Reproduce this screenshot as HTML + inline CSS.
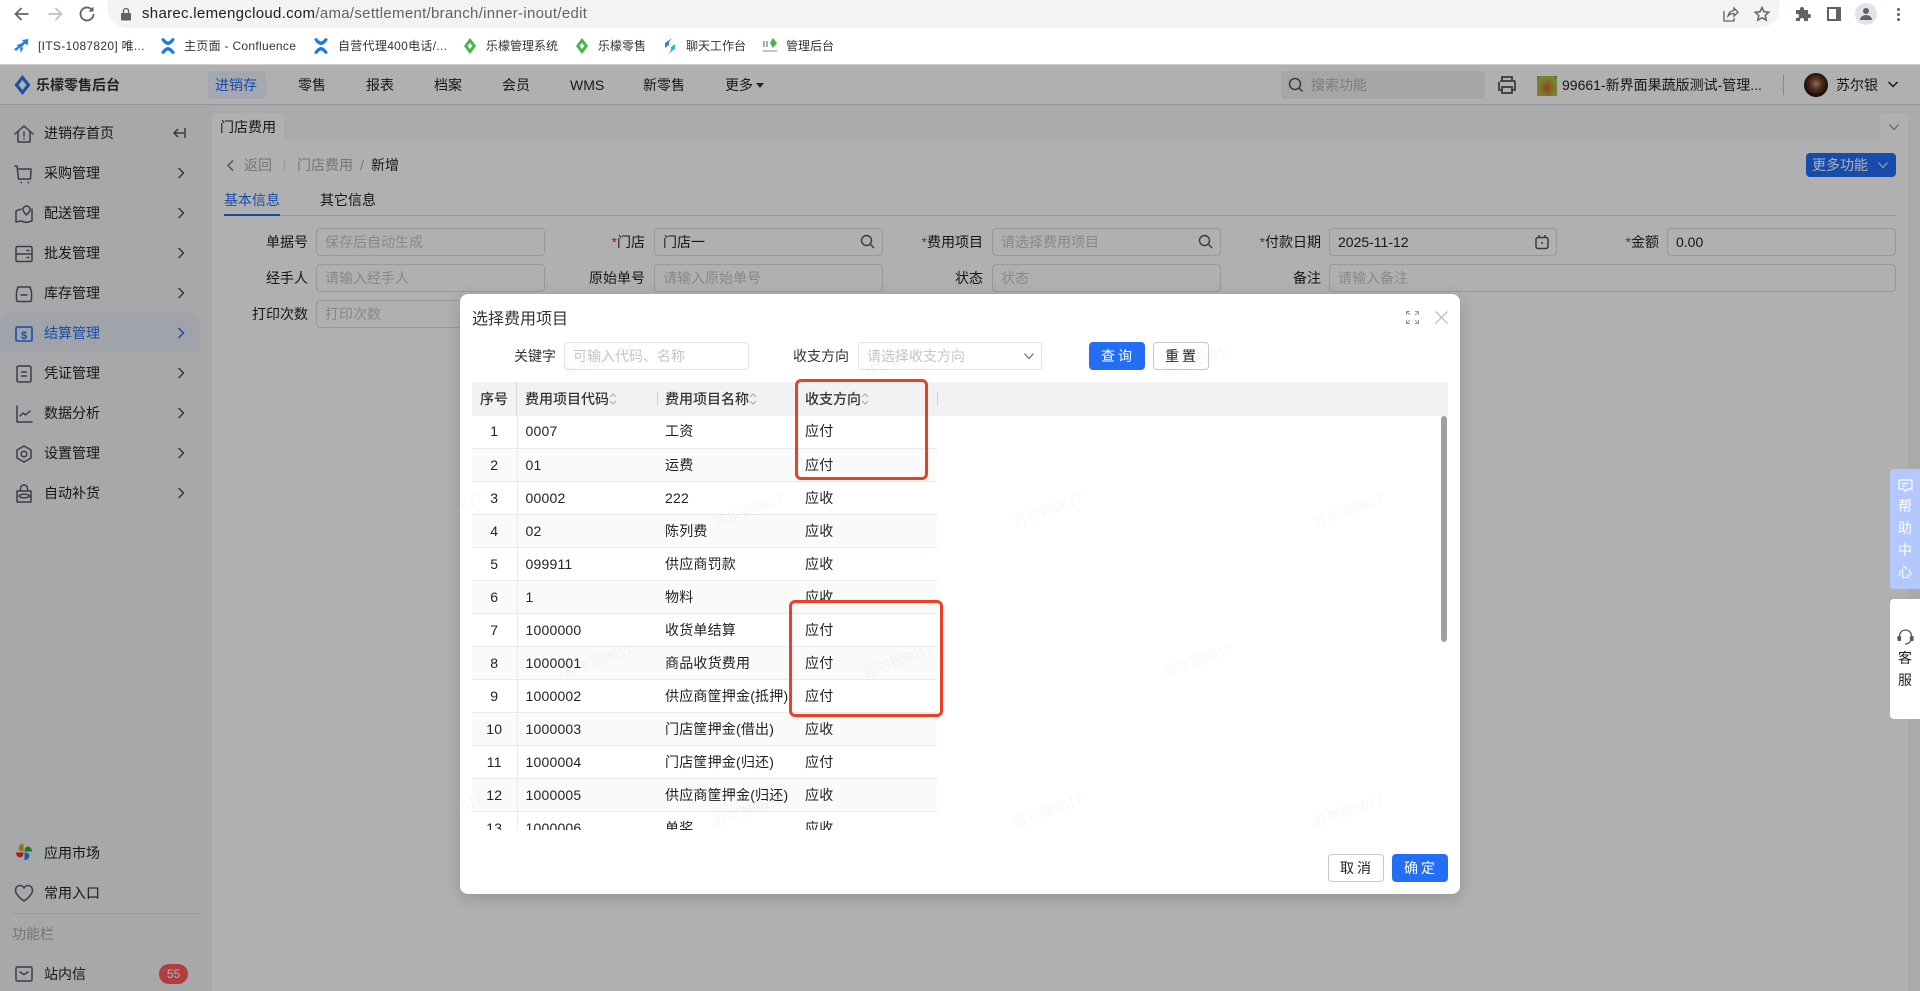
<!DOCTYPE html>
<html lang="zh-CN">
<head>
<meta charset="utf-8">
<title>选择费用项目</title>
<style>
html,body{margin:0;padding:0;width:1920px;height:991px;overflow:hidden;background:#fff;font-family:"Liberation Sans","Noto Sans CJK SC",sans-serif;font-size:14px;color:#222}
*{box-sizing:border-box}
.t{position:absolute;white-space:nowrap;line-height:20px;height:20px}
.a{position:absolute}
svg{position:absolute;overflow:visible}
.bm{font-size:12px;color:#333}
.ls{letter-spacing:.3px}
.si{stroke:#555a68;stroke-width:1.5;fill:none;stroke-linecap:round;stroke-linejoin:round}
.inp{position:absolute;height:28px;border:1px solid #dcdee2;border-radius:4px;background:#fff;padding:0 8px;line-height:26px;font-size:14px;color:#c6c6c6;white-space:nowrap;overflow:hidden}
.val{color:#222}
.lb{position:absolute;line-height:28px;height:28px;text-align:right;white-space:nowrap;color:#222}
.lb i{font-style:normal;color:#e03030}
table{border-collapse:collapse;table-layout:fixed;position:absolute;left:0;top:33px;width:465px}
td{height:33px;padding:0 0 0 8px;border-bottom:1px solid #e8eaec;line-height:32px;white-space:nowrap;color:#222;overflow:hidden;font-size:14px;letter-spacing:.2px}
td:first-child{text-align:center;padding:0;border-right:1px solid #e8eaec}
tr:nth-child(even) td{background:#f9fafa}
.th{position:absolute;top:0;height:34px;line-height:34px;font-weight:500;color:#333;white-space:nowrap}
.hs{position:absolute;top:10px;height:14px;width:1px;background:#cfd2d6}
.btn{position:absolute;height:28px;border-radius:4px;text-align:center;line-height:26px;font-size:14px;border:1px solid #c9c9c9;background:#fff;color:#222;letter-spacing:3px;padding-left:2px}
.pri{background:#246ef6;border-color:#246ef6;color:#fff}
.red{position:absolute;border:3px solid #ee3f24;border-radius:6px}
</style>
</head>
<body>
<!-- browser chrome -->
<div class="a" style="left:0;top:0;width:1920px;height:65px;background:#fff;border-bottom:1px solid #d0d0d0"></div>
<div class="a" style="left:107px;top:-14px;width:1673px;height:42px;background:#f1f3f4;border-radius:21px"></div>
<svg style="left:13px;top:5px" width="18" height="18" viewBox="0 0 18 18" fill="none" stroke="#5f6368" stroke-width="1.800"><path d="M15.500 9H2.500M8.500 3L2.500 9l6 6"/></svg>
<svg style="left:46px;top:5px" width="18" height="18" viewBox="0 0 18 18" fill="none" stroke="#bcc0c4" stroke-width="1.800"><path d="M2.500 9h13M9.500 3l6 6-6 6"/></svg>
<svg style="left:78px;top:5px" width="18" height="18" viewBox="0 0 18 18" fill="none" stroke="#5f6368" stroke-width="1.800"><path d="M14.500 5.500A6.500 6.500 0 1 0 15.500 9"/><path d="M15.500 1.500v5h-5z" fill="#5f6368" stroke="none"/></svg>
<svg style="left:121px;top:7px" width="10" height="14" viewBox="0 0 10 14"><path d="M1 6h8a1 1 0 0 1 1 1v5.500a1 1 0 0 1-1 1H1a1 1 0 0 1-1-1V7a1 1 0 0 1 1-1z" fill="#5f6368"/><path d="M2.500 6V4a2.500 2.500 0 0 1 5 0v2" fill="none" stroke="#5f6368" stroke-width="1.300"/></svg>
<div class="t" style="left:142px;top:4px;font-size:15px;color:#5f6368;letter-spacing:.3px"><span style="color:#202124">sharec.lemengcloud.com</span>/ama/settlement/branch/inner-inout/edit</div>
<svg style="left:1723px;top:6px" width="16" height="16" viewBox="0 0 16 16" fill="none" stroke="#5f6368" stroke-width="1.300"><path d="M1 5v10h10v-3M5 10c1-4 4-5.500 6-5.500V2l4 4.200-4 4V7.500c-2 0-4 .5-6 2.500z"/></svg>
<svg style="left:1754px;top:6px" width="16" height="16" viewBox="0 0 16 16" fill="none" stroke="#5f6368" stroke-width="1.500"><path d="M8 1.500l2 4.300 4.700.5-3.500 3.200 1 4.600L8 11.700l-4.200 2.400 1-4.600L1.300 6.300 6 5.800z"/></svg>
<svg style="left:1795px;top:6px" width="16" height="16" viewBox="0 0 16 16"><path d="M1 4h4V3a2 2 0 0 1 4 0v1h4v4h1a2 2 0 0 1 0 4h-1v3H9v-1a2 2 0 0 0-4 0v1H1v-3h1a2 2 0 0 0 0-4H1z" fill="#5f6368"/></svg>
<div class="a" style="left:1827px;top:7px;width:14px;height:14px;border:2px solid #5f6368;border-right-width:5px;background:#fff"></div>
<div class="a" style="left:1855px;top:3px;width:22px;height:22px;border-radius:50%;background:#e1e4ea"></div>
<svg style="left:1859px;top:7px" width="14" height="14" viewBox="0 0 14 14"><circle cx="7" cy="4" r="3" fill="#5f6368"/><path d="M1 13c0-3 3-5 6-5s6 2 6 5z" fill="#5f6368"/></svg>
<div class="a" style="left:1897px;top:8px;width:3px;height:3px;border-radius:50%;background:#5f6368;box-shadow:0 5px 0 #5f6368,0 10px 0 #5f6368"></div>

<!-- bookmarks -->
<svg style="left:14px;top:39px" width="15" height="14" viewBox="0 0 15 14"><path d="M14.500 0L8 1l1.500 1.800L5 6l2.500 2.500L11 4.500l2.500 2z" fill="#1d7fe8"/><path d="M8 4.500L2.500 6l1.500 1.500L0 10l2 2 4-3.500 1 1.500z" fill="#1d7fe8"/><path d="M6 9.500L7 14l2.500-6z" fill="#1d7fe8"/></svg>
<div class="t bm ls" style="left:38px;top:36px;">[ITS-1087820] 唯...</div>
<svg style="left:160px;top:38px" width="16" height="16" viewBox="0 0 16 16"><path d="M1 1c2 4 5 6 7 6s5-2 7-6l-3-1c-1 2-3 3.500-4 3.500S5 2 4 0zM1 15c2-4 5-6 7-6s5 2 7 6l-3 1c-1-2-3-3.500-4-3.500S5 14 4 16z" fill="#1c78e8"/></svg>
<div class="t bm ls" style="left:184px;top:36px;">主页面 - Confluence</div>
<svg style="left:313px;top:38px" width="16" height="16" viewBox="0 0 16 16"><path d="M1 1c2 4 5 6 7 6s5-2 7-6l-3-1c-1 2-3 3.500-4 3.500S5 2 4 0zM1 15c2-4 5-6 7-6s5 2 7 6l-3 1c-1-2-3-3.500-4-3.500S5 14 4 16z" fill="#1c78e8"/></svg>
<div class="t bm ls" style="left:338px;top:36px;">自营代理400电话/...</div>
<svg style="left:464px;top:38px" width="12" height="16" viewBox="0 0 12 16"><path d="M6 0l6 8-6 8-6-8z" fill="#44b549"/><path d="M6 5l2.500 3L6 11 3.500 8z" fill="#fff"/></svg>
<div class="t bm" style="left:486px;top:36px;">乐檬管理系统</div>
<svg style="left:576px;top:38px" width="12" height="16" viewBox="0 0 12 16"><path d="M6 0l6 8-6 8-6-8z" fill="#44b549"/><path d="M6 5l2.500 3L6 11 3.500 8z" fill="#fff"/></svg>
<div class="t bm" style="left:598px;top:36px;">乐檬零售</div>
<svg style="left:663px;top:38px" width="14" height="16" viewBox="0 0 14 16"><path d="M9 0L2 5v5l4-3V4z" fill="#2a86e8"/><path d="M5 16l7-5V6L8 9v3z" fill="#35b6d8"/></svg>
<div class="t bm" style="left:686px;top:36px;">聊天工作台</div>
<svg style="left:763px;top:38px" width="14" height="16" viewBox="0 0 14 16"><rect x="0" y="3" width="2" height="6" fill="#aaa"/><rect x="3" y="3" width="2" height="6" fill="#aaa"/><path d="M10 0l4 5-4 5-3-5z" fill="#44b549"/><rect x="0" y="12" width="14" height="2" fill="#c5c5c5"/></svg>
<div class="t bm" style="left:786px;top:36px;">管理后台</div>

<!-- app -->
<div class="a" style="left:0;top:65px;width:1920px;height:926px;background:#fff;overflow:hidden"></div>
<div class="a" style="left:0;top:104px;width:1920px;height:1px;background:#d8d8d8"></div>
<svg style="left:14px;top:75px" width="17" height="20" viewBox="0 0 17 20"><path d="M8.500 0l8 10-8 10-8-10z" fill="#2e74e6"/><path d="M8.500 5l4 5-4 5-4-5z" fill="#fff"/></svg>
<div class="t" style="left:36px;top:75px;font-weight:700;color:#333">乐檬零售后台</div>
<div class="a" style="left:208px;top:71px;width:58px;height:28px;background:#f0f3ff;border-radius:4px"></div>
<div class="t" style="left:215px;top:75px;color:#246ef6">进销存</div>
<div class="t" style="left:298px;top:75px">零售</div>
<div class="t" style="left:366px;top:75px">报表</div>
<div class="t" style="left:434px;top:75px">档案</div>
<div class="t" style="left:502px;top:75px">会员</div>
<div class="t" style="left:570px;top:75px">WMS</div>
<div class="t" style="left:643px;top:75px">新零售</div>
<div class="t" style="left:725px;top:75px">更多</div>
<svg style="left:756px;top:83px" width="8" height="5" viewBox="0 0 8 5"><path d="M0 0h8L4 5z" fill="#333"/></svg>

<div class="a" style="left:1281px;top:71px;width:204px;height:28px;background:#f0f1f4;border-radius:4px"></div>
<svg style="left:1288px;top:77px" width="16" height="16" viewBox="0 0 16 16" fill="none" stroke="#555" stroke-width="1.500"><circle cx="7" cy="7" r="5.500"/><path d="M11 11l3.500 3.500"/></svg>
<div class="t" style="left:1311px;top:75px;color:#b5b5b5">搜索功能</div>
<svg style="left:1497px;top:75px" width="20" height="20" viewBox="0 0 20 20" fill="none" stroke="#555" stroke-width="1.800"><path d="M5 6V2h10v4M3 6h14a1 1 0 0 1 1 1v8h-3M5 15H2V7"/><rect x="5" y="12" width="10" height="6"/></svg>
<div class="a" style="left:1537px;top:76px;width:20px;height:20px;background:radial-gradient(ellipse at 50% 60%,#d0602a 0,#c49a3a 35%,#9ccb55 75%,#6d9a38 100%)"></div>
<div class="t" style="left:1562px;top:75px;">99661-新界面果蔬版测试-管理...</div>
<div class="a" style="left:1783px;top:75px;width:1px;height:20px;background:#c8c8c8"></div>
<div class="a" style="left:1804px;top:73px;width:24px;height:24px;border-radius:50%;background:radial-gradient(circle at 50% 45%,#c89a80 0,#7a4a30 30%,#2a1208 65%,#120806)"></div>
<div class="t" style="left:1836px;top:75px;">苏尔银</div>
<svg style="left:1888px;top:81px" width="10" height="7" viewBox="0 0 10 7" fill="none" stroke="#222" stroke-width="1.500"><path d="M.5 1l4.500 4.500L9.500 1"/></svg>

<!-- sidebar -->
<div class="a" style="left:0;top:105px;width:212px;height:886px;background:#f1f3f6"></div>
<div class="a" style="left:0;top:313px;width:200px;height:40px;background:#e9ecf8;border-radius:8px"></div>
<svg style="left:14px;top:124px" width="20" height="20" viewBox="0 0 20 20" class="si"><path d="M1 10L10 2l9 8M4 8v10h12V8M10 8v4M10 14.500v.5"/></svg>
<svg style="left:14px;top:164px" width="20" height="20" viewBox="0 0 20 20" class="si"><path d="M1 2h2l1.500 13h12L17 5H4"/><path d="M7 18.500h.5M14 18.500h.5"/></svg>
<svg style="left:14px;top:204px" width="20" height="20" viewBox="0 0 20 20" class="si"><path d="M7 5L2 7v11l5-1 5 1.500 6-1.500V5"/><path d="M12.500 2a3.500 3.500 0 0 1 3.500 3.500c0 2-3.500 5.500-3.500 5.500S9 7.500 9 5.500A3.500 3.500 0 0 1 12.500 2z"/></svg>
<svg style="left:14px;top:244px" width="20" height="20" viewBox="0 0 20 20" class="si"><rect x="2" y="2.500" width="16" height="15" rx="1.500"/><path d="M2 10h16M13 6.500h2M13 13.500h2"/></svg>
<svg style="left:14px;top:284px" width="20" height="20" viewBox="0 0 20 20" class="si"><path d="M2.500 8L4 3h12l1.500 5v8a1.500 1.500 0 0 1-1.500 1.500H4A1.500 1.500 0 0 1 2.500 16zM7 11h6"/></svg>
<svg style="left:14px;top:324px" width="20" height="20" viewBox="0 0 20 20" fill="none" stroke="#246ef6" stroke-width="1.600"><rect x="2" y="3" width="16" height="14" rx="1.500"/><text x="10" y="15" text-anchor="middle" font-size="11" font-weight="700" fill="#246ef6" stroke="none" font-family="Liberation Sans">$</text></svg>
<svg style="left:14px;top:364px" width="20" height="20" viewBox="0 0 20 20" class="si"><rect x="3" y="2" width="14" height="16" rx="1.500"/><path d="M7.500 8h5M7.500 12h5"/></svg>
<svg style="left:14px;top:404px" width="20" height="20" viewBox="0 0 20 20" class="si"><path d="M3 2v16h15M6 12l3-3 2.500 2L16 7"/></svg>
<svg style="left:14px;top:444px" width="20" height="20" viewBox="0 0 20 20" class="si"><path d="M10 2l7 4v8l-7 4-7-4V6z"/><circle cx="10" cy="10" r="2.800"/></svg>
<svg style="left:14px;top:484px" width="20" height="20" viewBox="0 0 20 20" class="si"><path d="M3 7h14v11H3zM6.500 7V4.500a3.500 3.500 0 0 1 7 0V7M5 12c2-2.500 8-2.500 11 0-3 2.500-9 2.500-11 0z"/></svg>
<svg style="left:15px;top:843px" width="18" height="18" viewBox="0 0 18 18"><path d="M8.500 8.500V1C5 1 3.500 3.500 3.500 6c1 2 3 2.500 5 2.500z" fill="#e3a006"/><path d="M9.500 8.500H17c0-3.500-2.500-5-5-5-2 1-2.500 3-2.500 5z" fill="#2bb03f"/><path d="M8.500 9.500H1c0 3.500 2.500 5 5 5 2-1 2.500-3 2.500-5z" fill="#e83030"/><path d="M9.500 9.500V17c3.500 0 5-2.500 5-5-1-2-3-2.500-5-2.500z" fill="#2a84e8"/></svg>
<svg style="left:14px;top:883px" width="20" height="20" viewBox="0 0 20 20" class="si"><path d="M10 18C3 13 1.500 9.500 1.500 7A4.500 4.500 0 0 1 10 5a4.500 4.500 0 0 1 8.500 2c0 2.500-1.500 6-8.500 11z"/></svg>
<svg style="left:14px;top:964px" width="20" height="20" viewBox="0 0 20 20" class="si"><rect x="2" y="3" width="16" height="14" rx="1.500"/><path d="M6 8l4 2.500L14 8"/></svg>

<div class="t" style="left:44px;top:123px">进销存首页</div>
<div class="t" style="left:44px;top:163px">采购管理</div>
<div class="t" style="left:44px;top:203px">配送管理</div>
<div class="t" style="left:44px;top:243px">批发管理</div>
<div class="t" style="left:44px;top:283px">库存管理</div>
<div class="t" style="left:44px;top:323px;color:#246ef6">结算管理</div>
<div class="t" style="left:44px;top:363px">凭证管理</div>
<div class="t" style="left:44px;top:403px">数据分析</div>
<div class="t" style="left:44px;top:443px">设置管理</div>
<div class="t" style="left:44px;top:483px">自动补货</div>
<div class="t" style="left:44px;top:843px">应用市场</div>
<div class="t" style="left:44px;top:883px">常用入口</div>
<div class="t" style="left:12px;top:924px;color:#aaa">功能栏</div>
<div class="t" style="left:44px;top:964px">站内信</div>
<div class="a" style="left:12px;top:913px;width:188px;height:1px;background:#dfe1e6"></div>
<div class="a" style="left:159px;top:964px;width:29px;height:20px;border-radius:10px;background:#ff5a5f;color:#fff;font-size:12px;line-height:20px;text-align:center">55</div>
<svg style="left:173px;top:128px" width="13" height="10" viewBox="0 0 13 10" fill="none" stroke="#555" stroke-width="1.500"><path d="M12 0v10M11 5H1M5 1L1 5l4 4"/></svg>
<svg style="left:178px;top:168px" width="6" height="330" viewBox="0 0 6 330" fill="none" stroke="#555" stroke-width="1.500"><path d="M.5 0l5 5-5 5M.5 40l5 5-5 5M.5 80l5 5-5 5M.5 120l5 5-5 5M.5 200l5 5-5 5M.5 240l5 5-5 5M.5 280l5 5-5 5M.5 320l5 5-5 5"/><path d="M.5 160l5 5-5 5" stroke="#246ef6"/></svg>

<!-- tabs strip -->
<div class="a" style="left:212px;top:105px;width:1708px;height:36px;background:#f5f6f8"></div>
<div class="a" style="left:212px;top:113px;width:72px;height:28px;background:#fff;border-radius:4px 4px 0 0"></div>
<div class="t" style="left:220px;top:117px;">门店费用</div>
<div class="a" style="left:1880px;top:113px;width:28px;height:28px;background:#fff;border-radius:4px 4px 0 0"></div>
<svg style="left:1889px;top:124px" width="10" height="6" viewBox="0 0 10 6" fill="none" stroke="#999" stroke-width="1.300"><path d="M.5.5L5 5.500 9.500.5"/></svg>
<div class="a" style="left:1908px;top:141px;width:12px;height:850px;background:#f5f6f8"></div>

<!-- breadcrumb -->
<svg style="left:227px;top:160px" width="7" height="11" viewBox="0 0 7 11" fill="none" stroke="#777" stroke-width="1.500"><path d="M6 .5l-5 5 5 5"/></svg>
<div class="t" style="left:244px;top:155px;color:#aaa">返回</div>
<div class="a" style="left:284px;top:159px;width:1px;height:12px;background:#ddd"></div>
<div class="t" style="left:297px;top:155px;color:#aaa">门店费用</div>
<div class="t" style="left:360px;top:155px;color:#aaa">/</div>
<div class="t" style="left:371px;top:155px;color:#222">新增</div>
<div class="a" style="left:1806px;top:153px;width:90px;height:24px;background:#246ef6;border-radius:4px"></div>
<div class="t" style="left:1812px;top:155px;color:#fff">更多功能</div>
<svg style="left:1878px;top:162px" width="10" height="6" viewBox="0 0 10 6" fill="none" stroke="#cfe0ff" stroke-width="1.300"><path d="M.5.5L5 5.500 9.500.5"/></svg>
<div class="t" style="left:224px;top:190px;color:#246ef6">基本信息</div>
<div class="t" style="left:320px;top:190px">其它信息</div>
<div class="a" style="left:224px;top:215px;width:1672px;height:1px;background:#dcdee2"></div>
<div class="a" style="left:224px;top:214px;width:56px;height:2px;background:#246ef6"></div>

<!-- form -->
<div class="lb" style="right:1612px;top:228px">单据号</div>
<div class="inp" style="left:316px;top:228px;width:229px">保存后自动生成</div>
<div class="lb" style="right:1612px;top:264px">经手人</div>
<div class="inp" style="left:316px;top:264px;width:229px">请输入经手人</div>
<div class="lb" style="right:1612px;top:300px">打印次数</div>
<div class="inp" style="left:316px;top:300px;width:229px">打印次数</div>
<div class="lb" style="right:1275px;top:228px"><i>*</i>门店</div>
<div class="inp val" style="left:654px;top:228px;width:229px">门店一</div>
<svg style="left:860px;top:234px" width="15" height="15" viewBox="0 0 15 15" fill="none" stroke="#555" stroke-width="1.400"><circle cx="6.500" cy="6.500" r="5"/><path d="M10.500 10.500l3.500 3.500"/></svg>
<div class="lb" style="right:1275px;top:264px">原始单号</div>
<div class="inp" style="left:654px;top:264px;width:229px">请输入原始单号</div>
<div class="lb" style="right:937px;top:228px"><i>*</i>费用项目</div>
<div class="inp" style="left:992px;top:228px;width:229px">请选择费用项目</div>
<svg style="left:1198px;top:234px" width="15" height="15" viewBox="0 0 15 15" fill="none" stroke="#555" stroke-width="1.400"><circle cx="6.500" cy="6.500" r="5"/><path d="M10.500 10.500l3.500 3.500"/></svg>
<div class="lb" style="right:937px;top:264px">状态</div>
<div class="inp" style="left:992px;top:264px;width:229px">状态</div>
<div class="lb" style="right:599px;top:228px"><i>*</i>付款日期</div>
<div class="inp val" style="left:1329px;top:228px;width:228px">2025-11-12</div>
<svg style="left:1535px;top:235px" width="14" height="15" viewBox="0 0 14 15" fill="none" stroke="#555" stroke-width="1.500"><rect x="1" y="2.500" width="12" height="11" rx="2"/><path d="M4 0v2.500M10 0v2.500M6 8h2"/></svg>
<div class="lb" style="right:599px;top:264px">备注</div>
<div class="inp" style="left:1329px;top:264px;width:567px">请输入备注</div>
<div class="lb" style="right:261px;top:228px"><i>*</i>金额</div>
<div class="inp val" style="left:1667px;top:228px;width:229px">0.00</div>

<!-- dim overlay -->
<div class="a" style="left:0;top:65px;width:1920px;height:926px;background:rgba(0,0,0,.31)"></div>

<!-- faint page watermark (under side tabs and modal) -->
<svg style="left:0;top:0;pointer-events:none" width="1920" height="991" viewBox="0 0 1920 991" font-size="14" fill="rgba(255,255,255,.02)" text-anchor="middle" font-family="Liberation Sans,Noto Sans CJK SC,sans-serif">
<text x="300" y="365" transform="rotate(-20 300 365)">苏尔银9617</text><text x="1500" y="365" transform="rotate(-20 1500 365)">苏尔银9617</text><text x="1800" y="365" transform="rotate(-20 1800 365)">苏尔银9617</text>
<text x="150" y="515" transform="rotate(-20 150 515)">苏尔银9617</text><text x="1650" y="515" transform="rotate(-20 1650 515)">苏尔银9617</text>
<text x="300" y="665" transform="rotate(-20 300 665)">苏尔银9617</text><text x="1500" y="665" transform="rotate(-20 1500 665)">苏尔银9617</text><text x="1800" y="665" transform="rotate(-20 1800 665)">苏尔银9617</text>
<text x="150" y="815" transform="rotate(-20 150 815)">苏尔银9617</text><text x="1650" y="815" transform="rotate(-20 1650 815)">苏尔银9617</text>
</svg>

<!-- side tabs -->
<div class="a" style="left:1890px;top:469px;width:30px;height:120px;background:#b3c8fd;border-radius:4px 0 0 4px;color:#fff;text-align:center;font-size:14px;line-height:22px;padding-top:26px">帮<br>助<br>中<br>心</div>
<svg style="left:1898px;top:479px" width="15" height="14" viewBox="0 0 15 14" fill="none" stroke="#fff" stroke-width="1.200"><path d="M1 1h13v9H9.500L7.500 12.500 5.500 10H1zM4 4.500h6M4 7h3"/></svg>
<div class="a" style="left:1890px;top:599px;width:30px;height:120px;background:#fff;border-radius:4px 0 0 4px;color:#222;text-align:center;font-size:14px;line-height:22px;padding-top:48px">客<br>服</div>
<svg style="left:1897px;top:629px" width="17" height="17" viewBox="0 0 17 17" fill="none" stroke="#555a68" stroke-width="1.300"><path d="M2.500 9V7a6 6 0 0 1 12 0v2M8 15c3 0 5-1 6-4"/><rect x="1" y="7.500" width="2.500" height="4" rx="1" fill="#555a68"/><rect x="13.500" y="7.500" width="2.500" height="4" rx="1" fill="#555a68"/></svg>

<!-- modal -->
<div class="a" style="left:460px;top:294px;width:1000px;height:600px;background:#fff;border-radius:8px;box-shadow:0 4px 16px rgba(0,0,0,.16)"></div>
<div class="t" style="left:472px;top:309px;font-size:16px;line-height:22px;height:22px;color:#333">选择费用项目</div>
<svg style="left:1406px;top:311px" width="13" height="13" viewBox="0 0 13 13" fill="none" stroke="#999" stroke-width="1"><path d="M.5 4V.5H4M9 .5h3.500V4M12.500 9v3.500H9M4 12.500H.5V9M1 1l3 3M12 1L9 4M12 12L9 9M1 12l3-3"/></svg>
<svg style="left:1435px;top:311px" width="13" height="13" viewBox="0 0 13 13" fill="none" stroke="#b5b5b5" stroke-width="1.200"><path d="M.5.500l12 12M12.500.5l-12 12"/></svg>

<div class="lb" style="left:514px;top:342px;color:#333">关键字</div>
<div class="inp" style="left:564px;top:342px;width:185px;border-color:#dfe1e5">可输入代码、名称</div>
<div class="lb" style="left:793px;top:342px;color:#333">收支方向</div>
<div class="inp" style="left:858px;top:342px;width:184px;border-color:#dfe1e5">请选择收支方向</div>
<svg style="left:1024px;top:353px" width="10" height="6" viewBox="0 0 10 6" fill="none" stroke="#777" stroke-width="1.300"><path d="M.5.500L5 5.500 9.500.5"/></svg>
<div class="btn pri" style="left:1089px;top:342px;width:56px">查询</div>
<div class="btn" style="left:1153px;top:342px;width:56px">重置</div>

<!-- table -->
<div class="a" style="left:472px;top:382px;width:976px;height:448px;overflow:hidden">
  <div class="a" style="left:0;top:0;width:976px;height:34px;background:#f1f2f4"></div>
  <div class="th" style="left:8px">序号</div>
  <div class="a" style="left:44px;top:0;width:1px;height:34px;background:#d5d7db"></div>
  <div class="th" style="left:53px">费用项目代码</div>
  <svg style="left:137px;top:11px" width="8" height="12" viewBox="0 0 8 12" fill="none" stroke="#aaa" stroke-width="1.100"><path d="M1 4l3-3 3 3M1 8l3 3 3-3"/></svg>
  <div class="hs" style="left:185px"></div>
  <div class="th" style="left:193px">费用项目名称</div>
  <svg style="left:277px;top:11px" width="8" height="12" viewBox="0 0 8 12" fill="none" stroke="#aaa" stroke-width="1.100"><path d="M1 4l3-3 3 3M1 8l3 3 3-3"/></svg>
  <div class="th" style="left:333px">收支方向</div>
  <svg style="left:389px;top:11px" width="8" height="12" viewBox="0 0 8 12" fill="none" stroke="#aaa" stroke-width="1.100"><path d="M1 4l3-3 3 3M1 8l3 3 3-3"/></svg>
  <div class="hs" style="left:465px"></div>
  <table>
    <colgroup><col style="width:45px"><col style="width:140px"><col style="width:140px"><col style="width:140px"></colgroup>
    <tr><td>1</td><td>0007</td><td>工资</td><td>应付</td></tr>
    <tr><td>2</td><td>01</td><td>运费</td><td>应付</td></tr>
    <tr><td>3</td><td>00002</td><td>222</td><td>应收</td></tr>
    <tr><td>4</td><td>02</td><td>陈列费</td><td>应收</td></tr>
    <tr><td>5</td><td>099911</td><td>供应商罚款</td><td>应收</td></tr>
    <tr><td>6</td><td>1</td><td>物料</td><td>应收</td></tr>
    <tr><td>7</td><td>1000000</td><td>收货单结算</td><td>应付</td></tr>
    <tr><td>8</td><td>1000001</td><td>商品收货费用</td><td>应付</td></tr>
    <tr><td>9</td><td>1000002</td><td>供应商筐押金(抵押)</td><td>应付</td></tr>
    <tr><td>10</td><td>1000003</td><td>门店筐押金(借出)</td><td>应收</td></tr>
    <tr><td>11</td><td>1000004</td><td>门店筐押金(归还)</td><td>应付</td></tr>
    <tr><td>12</td><td>1000005</td><td>供应商筐押金(归还)</td><td>应收</td></tr>
    <tr><td>13</td><td>1000006</td><td>单奖</td><td>应收</td></tr>
  </table>
</div>
<div class="a" style="left:1441px;top:416px;width:6px;height:226px;background:#a0a0a0;border-radius:3px"></div>
<div class="btn" style="left:1328px;top:854px;width:56px;">取消</div>
<div class="btn pri" style="left:1392px;top:854px;width:56px">确定</div>

<!-- annotations -->
<div class="red" style="left:795px;top:379px;width:133px;height:101px"></div>
<div class="red" style="left:789px;top:600px;width:154px;height:117px"></div>

<!-- modal watermark -->
<svg style="left:460px;top:294px;overflow:hidden;pointer-events:none" width="1000" height="600" viewBox="460 294 1000 600" font-size="14" fill="rgba(0,0,0,.035)" text-anchor="middle" font-family="Liberation Sans,Noto Sans CJK SC,sans-serif">
<text x="600" y="365" transform="rotate(-20 600 365)">苏尔银9617</text><text x="900" y="365" transform="rotate(-20 900 365)">苏尔银9617</text><text x="1200" y="365" transform="rotate(-20 1200 365)">苏尔银9617</text>
<text x="450" y="515" transform="rotate(-20 450 515)">苏尔银9617</text><text x="750" y="515" transform="rotate(-20 750 515)">苏尔银9617</text><text x="1050" y="515" transform="rotate(-20 1050 515)">苏尔银9617</text><text x="1350" y="515" transform="rotate(-20 1350 515)">苏尔银9617</text>
<text x="600" y="665" transform="rotate(-20 600 665)">苏尔银9617</text><text x="900" y="665" transform="rotate(-20 900 665)">苏尔银9617</text><text x="1200" y="665" transform="rotate(-20 1200 665)">苏尔银9617</text>
<text x="450" y="815" transform="rotate(-20 450 815)">苏尔银9617</text><text x="750" y="815" transform="rotate(-20 750 815)">苏尔银9617</text><text x="1050" y="815" transform="rotate(-20 1050 815)">苏尔银9617</text><text x="1350" y="815" transform="rotate(-20 1350 815)">苏尔银9617</text>
</svg>
</body>
</html>
